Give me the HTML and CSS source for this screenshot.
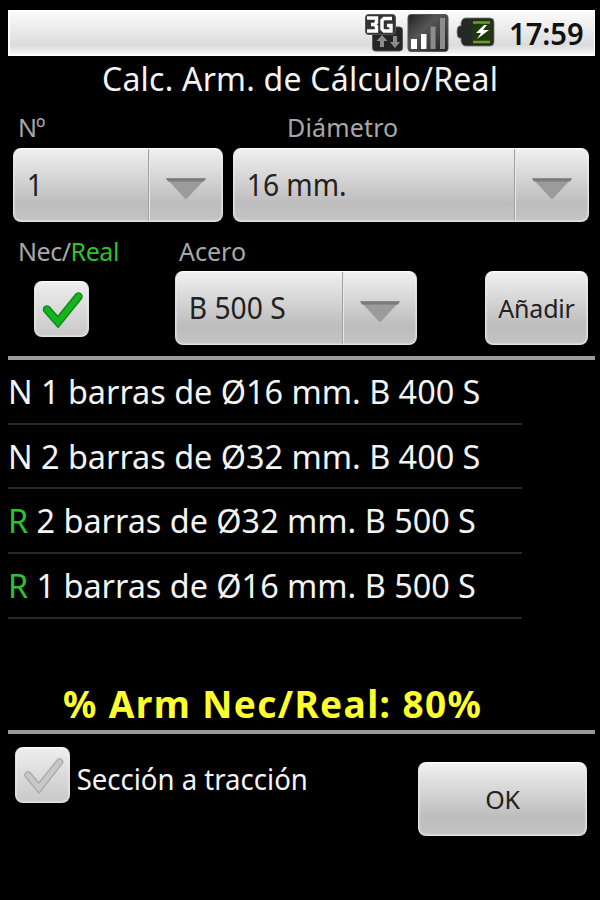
FILE: index.html
```html
<!DOCTYPE html>
<html lang="es">
<head>
<meta charset="utf-8">
<title>Calc. Arm. de Cálculo/Real</title>
<link rel="stylesheet" href="styles.css">
</head>
<body>
<main class="screen">
  <header class="status">
    <svg class="icon-3g" width="40" height="40" viewBox="0 0 40 40">
      <rect x="8.500" y="14" width="30" height="24" rx="3" fill="#252525" stroke="#555"/>
      <rect x="1.500" y="1.500" width="30" height="20" rx="3" fill="#333" stroke="#555"/>
      <path d="M3 5h9.500v4.500l-2 2 2 2V18H3M7 11.500h4M28 5.500h-8l-2 2V16l2 2h7v-5.500h-4" fill="none" stroke="#fff" stroke-width="3.400"/>
      <path d="M18 22l5.500 6H20v6h-4v-6h-3.500zM31 35l5-6h-3v-6h-4v6h-3z" fill="#8c8c8c"/>
    </svg>
    <svg class="icon-signal" width="42" height="40" viewBox="0 0 42 40">
      <defs><linearGradient id="sig" x1="0" y1="0" x2="1" y2="1"><stop offset="0" stop-color="#222"/><stop offset=".4" stop-color="#555"/><stop offset="1" stop-color="#222"/></linearGradient></defs>
      <rect x="1" y="1.500" width="40" height="37" rx="3" fill="url(#sig)" stroke="#555"/>
      <path d="M4 26h6v10H4zM14 21h5.500v15H14z" fill="#fff"/>
      <path d="M23.500 13.500h5V36h-5zM33 5h5v31h-5z" fill="#8c8c8c"/>
    </svg>
    <svg class="icon-battery" width="39" height="30" viewBox="0 0 39 30">
      <path d="M10 1h24q4 0 4 4v20q0 4-4 4H10q-4 0-5-5v-3H3q-2-1-2-6t2-6h2V6q1-5 5-5z" fill="#252925" stroke="#777" stroke-width=".8"/>
      <path d="M17 3h17q2 0 2 3v18q0 3-2 3H17q-3-12 0-24z" fill="#20380f"/>
      <path d="M17 5.500h17M17 25h17" stroke="#6f9c28" stroke-width="2.500"/>
      <path d="M28 8l-8 8h5l-4 6 12-9h-6l4-5z" fill="#fff"/>
    </svg>
    <span class="clock">17:59</span>
  </header>

  <h1 class="title">Calc. Arm. de Cálculo/Real</h1>

  <section class="labels labels-top">
    <span class="label-count">Nº</span><span class="label-diameter">Diámetro</span>
  </section>
  <section class="controls controls-top">
    <div class="spinner spinner-count"><span class="value">1</span><span class="drop"><svg width="42" height="23" viewBox="0 0 42 23"><path d="M1 1h40L22 21.500q-1 1-2 0z" fill="#9b9b9b"/><path d="M1 1.500h40l-2 3H3z" fill="#7b7b7b"/></svg></span></div>
    <div class="spinner spinner-diameter"><span class="value">16 mm.</span><span class="drop"><svg width="42" height="23" viewBox="0 0 42 23"><path d="M1 1h40L22 21.500q-1 1-2 0z" fill="#9b9b9b"/><path d="M1 1.500h40l-2 3H3z" fill="#7b7b7b"/></svg></span></div>
  </section>

  <section class="labels labels-steel">
    <span class="label-type">Nec/<span class="real">Real</span></span><span class="label-steel">Acero</span>
  </section>
  <section class="controls controls-steel">
    <span class="checkbox"><svg width="56" height="56" viewBox="0 0 56 56"><path d="M13 28.500L24 41 44.500 15.500" fill="none" stroke="#15861b" stroke-width="8.500" stroke-linecap="round"/><path d="M13 28.500L24 41 44.500 15.500" fill="none" stroke="#12b71c" stroke-width="5.500" stroke-linecap="round"/></svg></span>
    <div class="spinner spinner-steel"><span class="value">B 500 S</span><span class="drop"><svg width="42" height="23" viewBox="0 0 42 23"><path d="M1 1h40L22 21.500q-1 1-2 0z" fill="#9b9b9b"/><path d="M1 1.500h40l-2 3H3z" fill="#7b7b7b"/></svg></span></div>
    <button class="button button-add">Añadir</button>
  </section>

  <ul class="bars">
    <li><span>N 1 barras de Ø16 mm. B 400 S</span></li>
    <li><span>N 2 barras de Ø32 mm. B 400 S</span></li>
    <li><span><b class="real">R</b> 2 barras de Ø32 mm. B 500 S</span></li>
    <li><span><b class="real">R</b> 1 barras de Ø16 mm. B 500 S</span></li>
  </ul>

  <p class="result">% Arm Nec/Real: 80%</p>

  <footer class="footer">
    <span class="checkbox"><svg width="56" height="56" viewBox="0 0 56 56"><path d="M13 28L24 41 44.500 15" fill="none" stroke="#a9a9a9" stroke-width="7.500" stroke-linecap="round"/><path d="M13 28L24 41 44.500 15" fill="none" stroke="#c8c8c8" stroke-width="5" stroke-linecap="round"/></svg></span>
    <span class="option">Sección a tracción</span>
    <button class="button button-ok">OK</button>
  </footer>
</main>
</body>
</html>
```
FILE: styles.css
```css
* { box-sizing: border-box; }

body {
  margin: 0;
  background: #000;
  color: #f4f4f4;
  font-family: "Noto Sans", "Open Sans", sans-serif;
}

.screen {
  height: 900px;
  padding: 10px 5px 0 8px;
  overflow: hidden;
}

.status {
  display: flex;
  justify-content: flex-end;
  height: 46px;
  border: 2px solid #fff;
  border-width: 1px 1px 2px 2px;
  background: linear-gradient(#fcfcfc, #ececec 40%, #dcdcdc 80%, #f4f4f4);
}

.icon-3g { margin: 2px 3px 0 0; }
.icon-signal { margin: 2px 7px 0 0; }
.icon-battery { margin: 6px 14px 0 0; }

.clock {
  width: 85px;
  color: #111;
  font-size: 30px;
  font-weight: 600;
  line-height: 46px;
  transform: scaleX(.97);
  transform-origin: left;
}

.title {
  margin: 0;
  height: 44px;
  padding-left: 94px;
  font-size: 32px;
  font-weight: 400;
  letter-spacing: .22px;
  line-height: 46px;
  white-space: nowrap;
}

.labels {
  display: flex;
  color: #a8a8a8;
  font-size: 25px;
  white-space: nowrap;
}

.labels-top { height: 48px; line-height: 54px; }
.labels-steel { height: 49px; line-height: 58px; }
.label-count { width: 270px; padding-left: 10px; letter-spacing: -1px; }
.label-diameter { padding-left: 9px; letter-spacing: .15px; }
.label-type { width: 170px; padding-left: 10px; letter-spacing: -.45px; }
.label-steel { padding-left: 1px; }
.real { color: #2bc42f; font-weight: 400; }

.controls { display: flex; }
.controls-top { height: 74px; padding-left: 5px; gap: 10px; }
.controls-steel { height: 89px; padding-left: 26px; border-bottom: 4px solid #999; }

.spinner,
.button,
.checkbox {
  border: 1px solid #e2e2e2;
  border-top-color: #fff;
  border-radius: 8px;
  background: linear-gradient(#f0f0f0, #dcdcdc 30%, #bdbdbd 75%, #c4c4c4);
  box-shadow: inset 0 0 2px #fff;
  color: #222;
}

.spinner {
  display: flex;
  justify-content: space-between;
  height: 74px;
}

.spinner-count { width: 210px; }
.spinner-diameter { width: 356px; }
.spinner-steel { width: 242px; margin-left: 86px; }

.value {
  padding-left: 14px;
  font-size: 31px;
  line-height: 71px;
  transform: scaleX(.91);
  transform-origin: left;
  white-space: nowrap;
}

.drop {
  display: flex;
  width: 74px;
  padding: 28px 0 0 16px;
  border-left: 1px solid #a2a2a2;
  box-shadow: inset 1px 0 #e8e8e8;
}

.button {
  height: 74px;
  padding: 0;
  font-family: inherit;
  font-size: 25px;
  letter-spacing: -.2px;
  line-height: 70px;
}

.button-add { width: 103px; margin-left: 68px; }

.checkbox {
  flex: none;
  width: 55px;
  height: 56px;
  background: linear-gradient(#eee, #c8c8c8);
}

.checkbox svg { display: block; margin: -1px; }
.controls-steel .checkbox { margin-top: 10px; }

.bars {
  width: 514px;
  height: 322px;
  margin: 0;
  padding: 0;
  list-style: none;
  font-size: 33px;
  line-height: 64px;
}

.bars li {
  height: 64.7px;
  border-bottom: 2px solid #292929;
  white-space: nowrap;
}

.bars span {
  display: inline-block;
  transform: scaleX(.981);
  transform-origin: left;
}

.result {
  height: 52px;
  margin: 0;
  padding-left: 55px;
  border-bottom: 4px solid #999;
  color: #ffff2e;
  font-size: 37px;
  font-weight: 700;
  letter-spacing: 1.4px;
  line-height: 44px;
  white-space: nowrap;
}

.footer {
  display: flex;
  padding: 13px 0 0 7px;
}

.option {
  width: 348px;
  padding-left: 7px;
  font-size: 29px;
  line-height: 63px;
  transform: scaleX(.95);
  transform-origin: left;
  white-space: nowrap;
}

.button-ok { width: 169px; margin-top: 15px; }
```
